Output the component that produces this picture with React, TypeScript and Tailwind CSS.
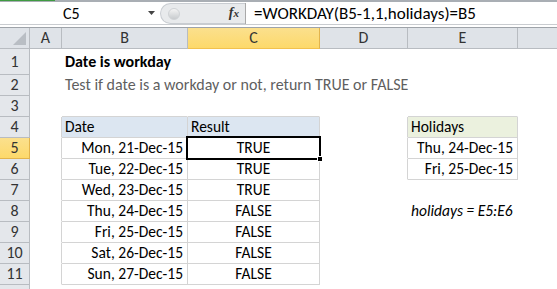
import React from "react";

const COLS = [
  { key: "A", w: "w-[32px]" },
  { key: "B", w: "w-[126px]" },
  { key: "C", w: "w-[132px]" },
  { key: "D", w: "w-[88px]" },
  { key: "E", w: "w-[110px]" },
  { key: "F", w: "w-[120px]" },
];

type CellSpec = {
  text?: string;
  align?: "left" | "right" | "center";
  bg?: string;
  r?: boolean;
  b?: boolean;
  cls?: string;
  selected?: boolean;
};

const rows: { n: number; h: string; cells: Record<string, CellSpec> }[] = [
  {
    n: 1,
    h: "h-[26px]",
    cells: { B: { text: "Date is workday", cls: "font-bold text-black text-[16px]" } },
  },
  {
    n: 2,
    h: "h-[21px]",
    cells: {
      B: {
        text: "Test if date is a workday or not, return TRUE or FALSE",
        cls: "text-[#5f5f5f] text-[16px]",
      },
    },
  },
  {
    n: 3,
    h: "h-[21px]",
    cells: { B: { b: true }, C: { b: true }, E: { b: true } },
  },
  {
    n: 4,
    h: "h-[21px]",
    cells: {
      A: { r: true },
      B: { text: "Date", r: true, b: true, bg: "bg-[#dce6f1]" },
      C: { text: "Result", r: true, b: true, bg: "bg-[#dce6f1]" },
      D: { r: true },
      E: { text: "Holidays", r: true, b: true, bg: "bg-[#ebf1de]" },
    },
  },
  {
    n: 5,
    h: "h-[21px]",
    cells: {
      A: { r: true },
      B: { text: "Mon, 21-Dec-15", align: "right", r: true, b: true },
      C: { text: "TRUE", align: "center", r: true, b: true, selected: true },
      D: { r: true },
      E: { text: "Thu, 24-Dec-15", align: "right", r: true, b: true },
    },
  },
  {
    n: 6,
    h: "h-[21px]",
    cells: {
      A: { r: true },
      B: { text: "Tue, 22-Dec-15", align: "right", r: true, b: true },
      C: { text: "TRUE", align: "center", r: true, b: true },
      D: { r: true },
      E: { text: "Fri, 25-Dec-15", align: "right", r: true, b: true },
    },
  },
  {
    n: 7,
    h: "h-[21px]",
    cells: {
      A: { r: true },
      B: { text: "Wed, 23-Dec-15", align: "right", r: true, b: true },
      C: { text: "TRUE", align: "center", r: true, b: true },
    },
  },
  {
    n: 8,
    h: "h-[21px]",
    cells: {
      A: { r: true },
      B: { text: "Thu, 24-Dec-15", align: "right", r: true, b: true },
      C: { text: "FALSE", align: "center", r: true, b: true },
      E: { text: "holidays = E5:E6", cls: "italic" },
    },
  },
  {
    n: 9,
    h: "h-[21px]",
    cells: {
      A: { r: true },
      B: { text: "Fri, 25-Dec-15", align: "right", r: true, b: true },
      C: { text: "FALSE", align: "center", r: true, b: true },
    },
  },
  {
    n: 10,
    h: "h-[21px]",
    cells: {
      A: { r: true },
      B: { text: "Sat, 26-Dec-15", align: "right", r: true, b: true },
      C: { text: "FALSE", align: "center", r: true, b: true },
    },
  },
  {
    n: 11,
    h: "h-[21px]",
    cells: {
      A: { r: true },
      B: { text: "Sun, 27-Dec-15", align: "right", r: true, b: true },
      C: { text: "FALSE", align: "center", r: true, b: true },
    },
  },
];

function Cell({ w, spec }: { w: string; spec?: CellSpec }) {
  const s = spec || {};
  const align =
    s.align === "right"
      ? "justify-end pr-[4px]"
      : s.align === "center"
      ? "justify-center"
      : "justify-start pl-[3px]";
  return (
    <div
      className={[
        "relative shrink-0 flex items-center whitespace-nowrap overflow-visible border-r border-b",
        w,
        align,
        s.r ? "border-r-[#d4d4d4]" : "border-r-transparent",
        s.b ? "border-b-[#d4d4d4]" : "border-b-transparent",
        s.bg || "",
        s.cls || "text-black",
      ].join(" ")}
    >
      {s.text && <span className="relative z-0">{s.text}</span>}
      {s.selected && (
        <div className="absolute left-[-2px] top-[-2px] right-[-2px] bottom-[-2px] border-2 border-black z-10">
          <div className="absolute right-[-4px] bottom-[-4px] w-[6px] h-[6px] bg-black border border-white" />
        </div>
      )}
    </div>
  );
}

export default function App() {
  return (
    <div className="w-[557px] h-[289px] overflow-hidden bg-white text-[15.5px] leading-none font-['Carlito','Open_Sans',sans-serif] text-black">
      {/* top line */}
      <div className="h-[2px] bg-[#a9aeb4] flex">
        <div className="w-[55px] h-[1px] bg-[#3f9b41]" />
      </div>
      <div className="h-[1px] bg-white" />
      {/* formula bar */}
      <div className="h-[21px] flex items-stretch bg-white">
        <div className="w-[160px] flex items-center relative">
          <span className="absolute left-[63px] top-[3px] text-[16px]">C5</span>
          <svg className="absolute left-[148px] top-[8px]" width="8" height="5" viewBox="0 0 8 5">
            <path d="M0 0 H7 L3.5 4 Z" fill="#444" />
          </svg>
        </div>
        <div className="w-[85px] flex items-center relative bg-[#e8eaec] rounded-l-[11px] border border-[#c8ccd1] border-r-0">
          <div className="absolute left-[7px] top-[4px] w-[12px] h-[12px] rounded-full bg-gradient-to-b from-[#f4f4f4] to-[#c8cbce] border border-[#cfd2d5]" />
          <span className="absolute right-[6px] top-[2px] italic font-bold font-['Liberation_Serif',serif] text-[14px] text-[#333]">
            f<span className="text-[11px]">x</span>
          </span>
        </div>
        <div className="w-[1px] bg-[#a9a9a9]" />
        <div className="flex-1 flex items-center pl-[8px] text-[17px]">
          <span>=WORKDAY(B5-1,1,holidays)=B5</span>
        </div>
      </div>
      <div className="h-[1px] bg-[#c9ccd0]" />
      <div className="h-[2px] bg-white" />
      <div className="h-[1px] bg-[#9ea3a9]" />
      {/* column header */}
      <div className="h-[21px] flex bg-[#dfe3e8] border-b border-[#b8bcc1] text-[#333] text-[16px]">
        <div className="w-[30px] shrink-0 border-r border-[#b8bcc1] relative">
          <svg className="absolute right-[3px] bottom-[3px]" width="13" height="13" viewBox="0 0 13 13">
            <path d="M13 0 L13 13 L0 13 Z" fill="#b9bec4" />
          </svg>
        </div>
        {COLS.map((c) =>
          c.key === "C" ? (
            <div
              key={c.key}
              className={`${c.w} shrink-0 flex items-center justify-center border-r border-[#e3b44c] bg-gradient-to-b from-[#fbe08d] to-[#fdd96a] -mb-[1px] border-b border-b-[#f2c14e]`}
            >
              {c.key}
            </div>
          ) : (
            <div
              key={c.key}
              className={`${c.w} shrink-0 flex items-center justify-center border-r border-[#b8bcc1]`}
            >
              {c.key === "F" ? "" : c.key}
            </div>
          )
        )}
      </div>
      {/* rows */}
      {rows.map((row) => (
        <div key={row.n} className={`${row.h} flex`}>
          {row.n === 5 ? (
            <div className="w-[30px] shrink-0 flex items-center justify-center bg-gradient-to-b from-[#fbe08d] to-[#fdd96a] border-r border-b border-[#e3b44c] text-[#333] text-[16px]">
              {row.n}
            </div>
          ) : (
            <div className="w-[30px] shrink-0 flex items-center justify-center bg-[#e4e7eb] border-r border-b border-[#b8bcc1] text-[#333] text-[16px]">
              {row.n}
            </div>
          )}
          {COLS.map((c) => (
            <Cell key={c.key} w={c.w} spec={row.cells[c.key]} />
          ))}
        </div>
      ))}
      <div className="h-[21px] flex">
        <div className="w-[30px] shrink-0 bg-[#e4e7eb] border-r border-[#b8bcc1]" />
      </div>
    </div>
  );
}
